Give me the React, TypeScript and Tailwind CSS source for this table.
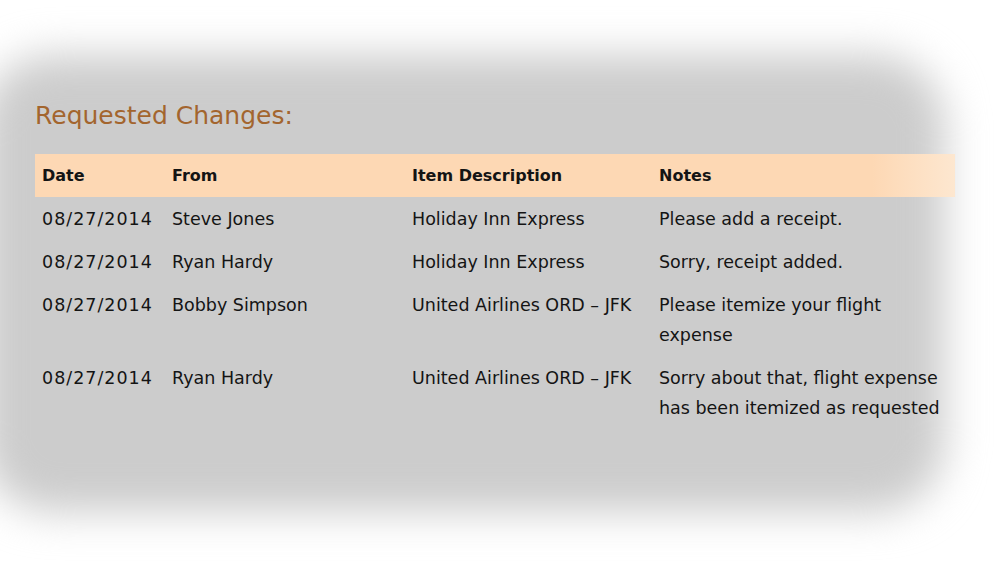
import React from "react";

type Row = { date: string; from: string; item: string; notes: string };

const rows: Row[] = [
  { date: "08/27/2014", from: "Steve Jones", item: "Holiday Inn Express", notes: "Please add a receipt." },
  { date: "08/27/2014", from: "Ryan Hardy", item: "Holiday Inn Express", notes: "Sorry, receipt added." },
  { date: "08/27/2014", from: "Bobby Simpson", item: "United Airlines ORD \u2013 JFK", notes: "Please itemize your flight expense" },
  { date: "08/27/2014", from: "Ryan Hardy", item: "United Airlines ORD \u2013 JFK", notes: "Sorry about that, flight expense has been itemized as requested" },
];

export default function App() {
  return (
    <div
      className="w-[1005px] h-[576px] overflow-hidden bg-white pt-[55px]"
      style={{ fontFamily: '"DejaVu Sans", Verdana, sans-serif' }}
    >
      <div className="relative -ml-[18px] w-[963px] h-[457px] pt-[46px] pl-[53px]">
        <div className="absolute inset-0 bg-[#cccccc] rounded-[70px] blur-[20px]" />
        <div className="relative">
          <h2 className="text-[25px] leading-[30px] text-[#a3652e] font-normal">Requested Changes:</h2>
          <div className="mt-[23px] w-[920px] text-[#141414]">
            <div className="grid grid-cols-[130px_240px_247px_303px] bg-[linear-gradient(to_right,#fdd8b4_91%,#fde7d0)] text-[16px] font-bold leading-[20px]">
              <div className="pl-[7px] pt-[12px] pb-[11px]">Date</div>
              <div className="pl-[7px] pt-[12px] pb-[11px]">From</div>
              <div className="pl-[7px] pt-[12px] pb-[11px]">Item Description</div>
              <div className="pl-[7px] pt-[12px] pb-[11px]">Notes</div>
            </div>
            {rows.map((r, i) => (
              <div key={i} className="grid grid-cols-[130px_240px_247px_303px] text-[17.5px] leading-[30px]">
                <div className="pl-[7px] pt-[7px] pb-[6px] tracking-[1px]">{r.date}</div>
                <div className="pl-[7px] pt-[7px] pb-[6px]">{r.from}</div>
                <div className="pl-[7px] pt-[7px] pb-[6px] whitespace-nowrap">{r.item}</div>
                <div className="pl-[7px] pr-[11px] pt-[7px] pb-[6px]">{r.notes}</div>
              </div>
            ))}
          </div>
        </div>
      </div>
    </div>
  );
}
